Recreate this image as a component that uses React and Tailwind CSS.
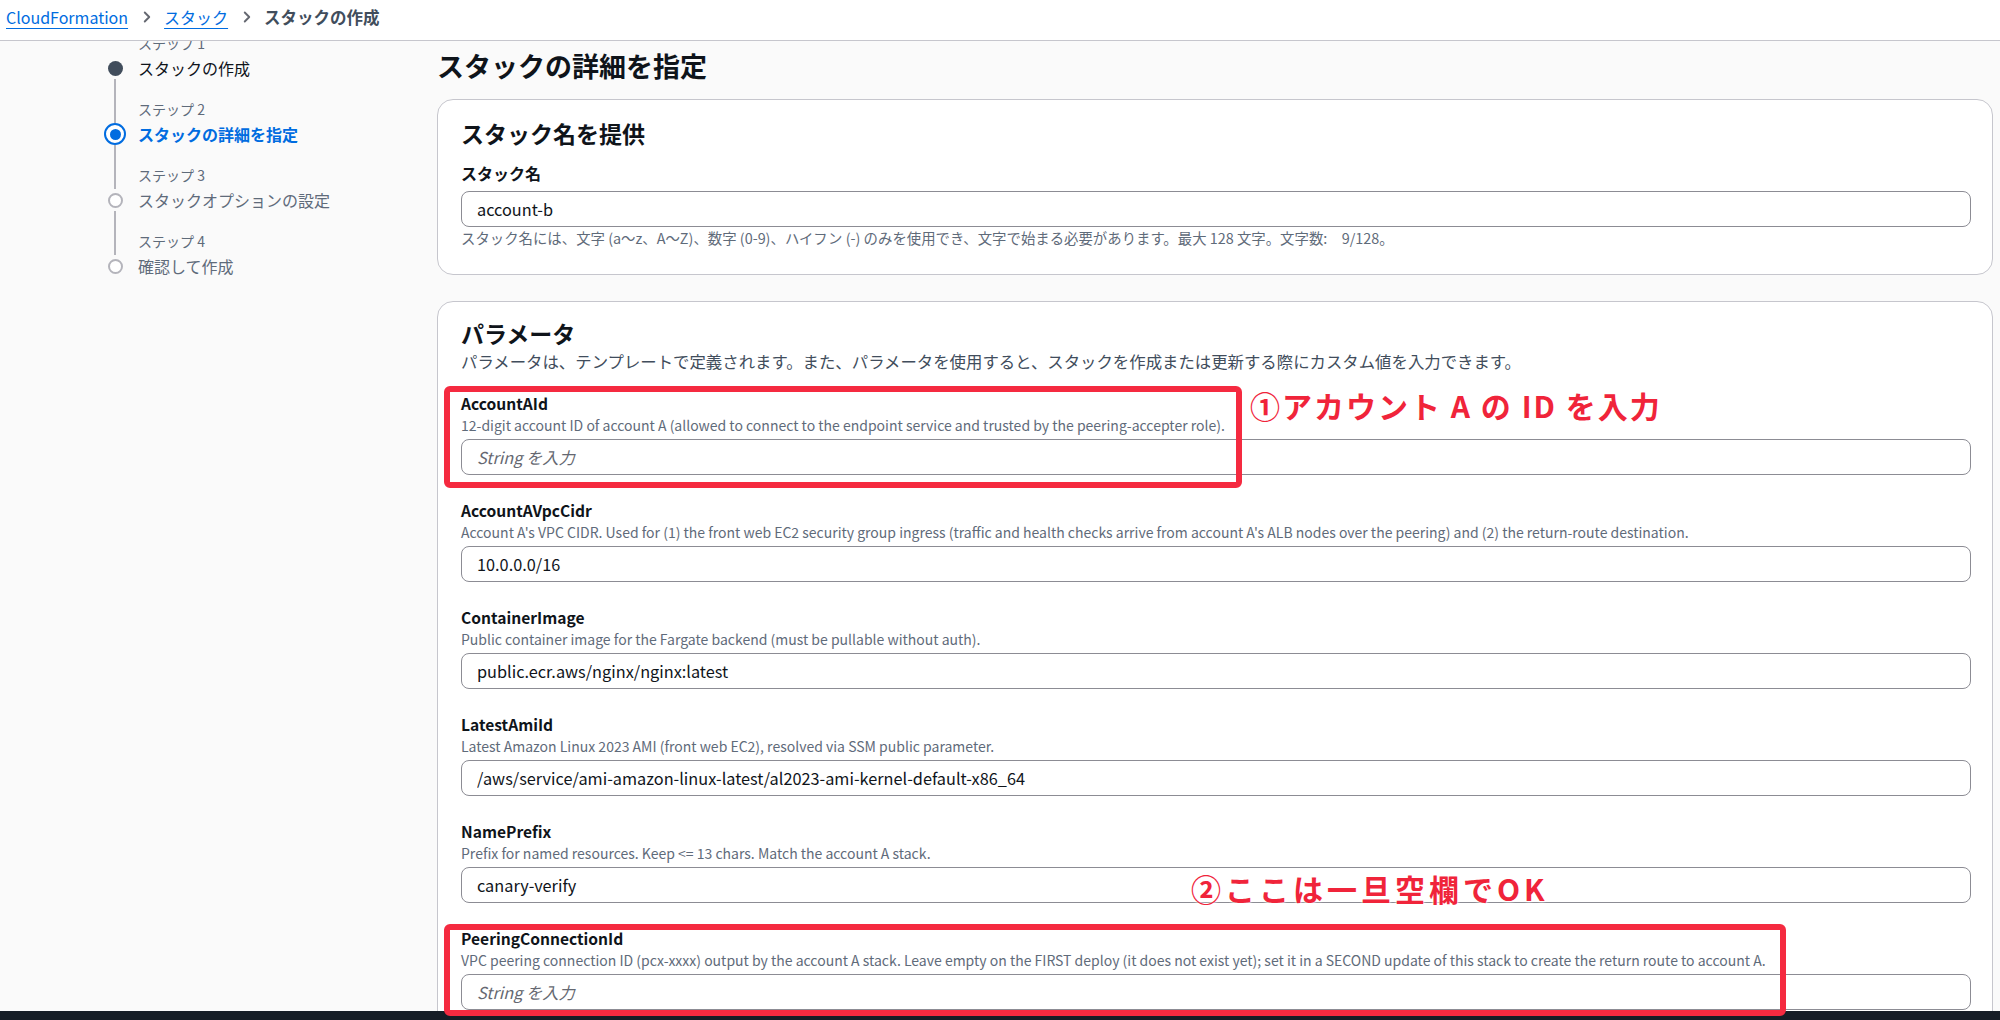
import { ChevronRight } from 'lucide-react';

const steps = [
    { label: 'ステップ 1', title: 'スタックの作成', state: 'done' },
    { label: 'ステップ 2', title: 'スタックの詳細を指定', state: 'current' },
    { label: 'ステップ 3', title: 'スタックオプションの設定', state: 'todo' },
    { label: 'ステップ 4', title: '確認して作成', state: 'todo' },
];

const params = [
    {
        name: 'AccountAId',
        desc: '12-digit account ID of account A (allowed to connect to the endpoint service and trusted by the peering-accepter role).',
        value: '',
    },
    {
        name: 'AccountAVpcCidr',
        desc: "Account A's VPC CIDR. Used for (1) the front web EC2 security group ingress (traffic and health checks arrive from account A's ALB nodes over the peering) and (2) the return-route destination.",
        value: '10.0.0.0/16',
    },
    {
        name: 'ContainerImage',
        desc: 'Public container image for the Fargate backend (must be pullable without auth).',
        value: 'public.ecr.aws/nginx/nginx:latest',
    },
    {
        name: 'LatestAmiId',
        desc: 'Latest Amazon Linux 2023 AMI (front web EC2), resolved via SSM public parameter.',
        value: '/aws/service/ami-amazon-linux-latest/al2023-ami-kernel-default-x86_64',
    },
    {
        name: 'NamePrefix',
        desc: 'Prefix for named resources. Keep <= 13 chars. Match the account A stack.',
        value: 'canary-verify',
    },
    {
        name: 'PeeringConnectionId',
        desc: 'VPC peering connection ID (pcx-xxxx) output by the account A stack. Leave empty on the FIRST deploy (it does not exist yet); set it in a SECOND update of this stack to create the return route to account A.',
        value: '',
    },
];

const StepDot = ({ state }) => {
    if (state === 'done') return <span className="w-[15px] h-[15px] rounded-full bg-[#414d5c]" />;
    if (state === 'current')
        return (
            <span className="w-[22px] h-[22px] rounded-full border-[2.5px] border-[#006ce0] bg-white flex items-center justify-center">
                <span className="w-[11px] h-[11px] rounded-full bg-[#006ce0]" />
            </span>
        );
    return <span className="w-[15px] h-[15px] rounded-full border-2 border-[#b4b4bb] bg-white" />;
};

const TextInput = ({ value, placeholder }) => (
    <input
        readOnly
        defaultValue={value}
        placeholder={placeholder}
        className="w-full h-[36px] rounded-[8px] border border-[#8c8c94] bg-white px-[15px] text-[16.3px] text-[#0f141a] outline-none placeholder:italic placeholder:text-[#656871]"
    />
);

export default function App() {
    return (
        <div className="relative w-[2000px] h-[1020px] overflow-hidden flex flex-col bg-[#fafafa] font-['Noto_Sans_CJK_JP',sans-serif] text-[#0f141a]">
            {/* breadcrumb bar */}
            <header className="h-[41px] shrink-0 bg-white border-b border-[#c6c6cd] flex items-start pt-[5px] pl-[6px] text-[16px] leading-[24px]">
                <a href="#" className="text-[#006ce0] underline underline-offset-[4px]">CloudFormation</a>
                <ChevronRight size={18} strokeWidth={2.5} className="text-[#656871] ml-[10px] mr-[8px] mt-[3px]" />
                <a href="#" className="text-[#006ce0] underline underline-offset-[4px]">スタック</a>
                <ChevronRight size={18} strokeWidth={2.5} className="text-[#656871] ml-[10px] mr-[8px] mt-[3px]" />
                <span className="font-bold text-[#414d5c] text-[16.5px]">スタックの作成</span>
            </header>

            <div className="flex-1 flex overflow-hidden">
                {/* steps */}
                <nav className="w-[437px] shrink-0 pl-[103px] -mt-[8px]">
                    {steps.map((s, i) => (
                        <div key={s.label} className={i === 0 ? 'flex' : 'flex pt-[20px]'}>
                            <div className="w-[24px] flex flex-col items-center">
                                <div className={i === 0 ? 'flex-1' : 'flex-1 w-[2px] bg-[#b4b4bb] -mt-[20px]'} />
                                <div className="h-[22px] flex items-center justify-center">
                                    <StepDot state={s.state} />
                                </div>
                            </div>
                            <div className="pl-[11px]">
                                <div className="text-[14px] leading-[20px] text-[#5f6b7a]">{s.label}</div>
                                <div
                                    className={
                                        s.state === 'current'
                                            ? 'mt-[4px] text-[16px] leading-[22px] font-bold text-[#006ce0]'
                                            : s.state === 'done'
                                            ? 'mt-[4px] text-[16px] leading-[22px] text-[#0f141a]'
                                            : 'mt-[4px] text-[16px] leading-[22px] text-[#5f6b7a]'
                                    }
                                >
                                    {s.title}
                                </div>
                            </div>
                        </div>
                    ))}
                </nav>

                {/* main */}
                <main className="flex-1 pr-[7px] pt-[8px]">
                    <h1 className="text-[27px] leading-[34px] font-bold">スタックの詳細を指定</h1>

                    <section className="mt-[16px] bg-white border border-[#c6c6cd] rounded-[16px] pl-[23px] pr-[21px] pt-[18px] pb-[27px]">
                        <h2 className="text-[23px] leading-[30px] font-bold">スタック名を提供</h2>
                        <div className="mt-[14px] text-[16px] leading-[22px] font-bold">スタック名</div>
                        <div className="mt-[7px]">
                            <TextInput value="account-b" />
                        </div>
                        <p className="mt-[2px] text-[14.4px] leading-[18px] text-[#5f6b7a]">
                            スタック名には、文字 (a〜z、A〜Z)、数字 (0-9)、ハイフン (-) のみを使用でき、文字で始まる必要があります。最大 128 文字。文字数:　9/128。
                        </p>
                    </section>

                    <section className="mt-[26px] bg-white border border-[#c6c6cd] rounded-[16px] pl-[23px] pr-[21px] pt-[16px] pb-[40px]">
                        <h2 className="text-[23px] leading-[30px] font-bold">パラメータ</h2>
                        <p className="mt-[1px] text-[16.4px] leading-[24px] text-[#414d5c]">
                            パラメータは、テンプレートで定義されます。また、パラメータを使用すると、スタックを作成または更新する際にカスタム値を入力できます。
                        </p>
                        <div className="mt-[20px] flex flex-col gap-[25px]">
                            {params.map((p) => (
                                <div key={p.name}>
                                    <div className="text-[15.6px] leading-[20px] font-bold">{p.name}</div>
                                    <div className="mt-[3px] text-[14px] leading-[18px] text-[#5f6b7a]">{p.desc}</div>
                                    <div className="mt-[5px]">
                                        <TextInput value={p.value} placeholder={p.value ? undefined : 'String を入力'} />
                                    </div>
                                </div>
                            ))}
                        </div>
                    </section>
                </main>
            </div>

            <div className="h-[9px] shrink-0 bg-[#161d26]" />

            {/* annotations */}
            <div className="absolute left-[444px] top-[386px] w-[798px] h-[102px] border-[6px] border-[#f52a40] rounded-[6px]" />
            <div className="absolute left-[1250px] top-[385px] text-[30px] leading-[40px] font-bold tracking-[2px] text-[#f0243a] [text-shadow:0_0_3px_#fff,0_0_3px_#fff]">
                ①アカウント A の ID を入力
            </div>
            <div className="absolute left-[1191px] top-[868px] text-[30px] leading-[40px] font-bold tracking-[4px] text-[#f0243a] [text-shadow:0_0_3px_#fff,0_0_3px_#fff]">
                ②ここは一旦空欄でOK
            </div>
            <div className="absolute left-[444px] top-[924px] w-[1342px] h-[92px] border-[6px] border-[#f52a40] rounded-[6px]" />
        </div>
    );
}
